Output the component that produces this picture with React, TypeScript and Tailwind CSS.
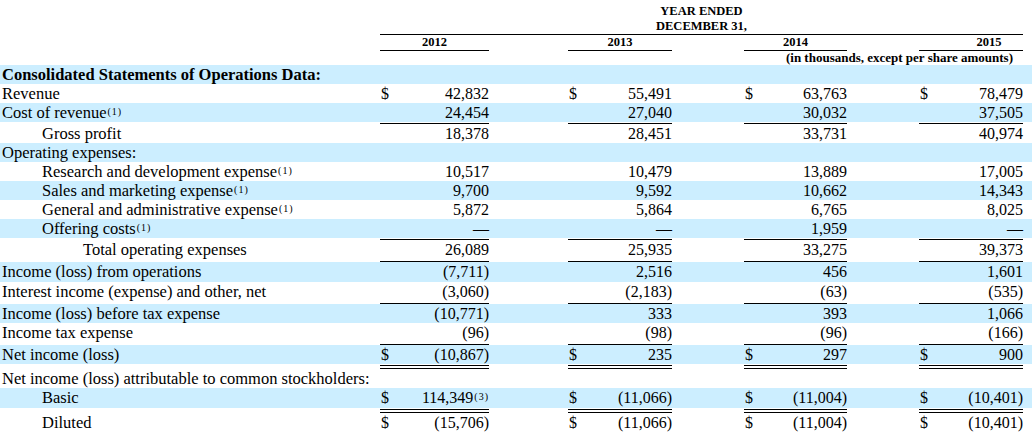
import React, { Fragment, ReactNode } from "react";

const COLS = "grid grid-cols-[380px_109px_79px_104px_72px_103px_72px_104px_9px]";

const Sup = ({ n }: { n: string }) => (
  <span className="relative -top-[3px] ml-[1px] text-[10px] tracking-[1px]">({n})</span>
);

type RowDef = {
  label: ReactNode;
  indent?: 0 | 1 | 2;
  bold?: boolean;
  blue?: boolean;
  vals?: ReactNode[];
  dollar?: boolean;
  h?: 19 | 20;
  rule?: "single" | "double";
};

const HEIGHT: Record<number, string> = {
  19: "h-[19px] leading-[19px]",
  20: "h-[20px] leading-[20px]",
};
const INDENT = ["pl-[2px]", "pl-[42px]", "pl-[83px]"];

const rows: RowDef[] = [
  { label: "Consolidated Statements of Operations Data:", bold: true, blue: true },
  { label: "Revenue", vals: ["42,832", "55,491", "63,763", "78,479"], dollar: true },
  {
    label: <>Cost of revenue<Sup n="1" /></>,
    blue: true,
    vals: ["24,454", "27,040", "30,032", "37,505"],
    rule: "single",
  },
  { label: "Gross profit", indent: 1, vals: ["18,378", "28,451", "33,731", "40,974"] },
  { label: "Operating expenses:", blue: true },
  {
    label: <>Research and development expense<Sup n="1" /></>,
    indent: 1,
    vals: ["10,517", "10,479", "13,889", "17,005"],
  },
  {
    label: <>Sales and marketing expense<Sup n="1" /></>,
    indent: 1,
    blue: true,
    vals: ["9,700", "9,592", "10,662", "14,343"],
  },
  {
    label: <>General and administrative expense<Sup n="1" /></>,
    indent: 1,
    vals: ["5,872", "5,864", "6,765", "8,025"],
  },
  {
    label: <>Offering costs<Sup n="1" /></>,
    indent: 1,
    blue: true,
    vals: ["—", "—", "1,959", "—"],
    rule: "single",
  },
  {
    label: "Total operating expenses",
    indent: 2,
    h: 20,
    vals: ["26,089", "25,935", "33,275", "39,373"],
    rule: "single",
  },
  {
    label: "Income (loss) from operations",
    blue: true,
    h: 20,
    vals: ["(7,711)", "2,516", "456", "1,601"],
  },
  {
    label: "Interest income (expense) and other, net",
    h: 20,
    vals: ["(3,060)", "(2,183)", "(63)", "(535)"],
    rule: "single",
  },
  {
    label: "Income (loss) before tax expense",
    blue: true,
    vals: ["(10,771)", "333", "393", "1,066"],
  },
  {
    label: "Income tax expense",
    h: 20,
    vals: ["(96)", "(98)", "(96)", "(166)"],
    rule: "single",
  },
  {
    label: "Net income (loss)",
    blue: true,
    dollar: true,
    vals: ["(10,867)", "235", "297", "900"],
    rule: "double",
  },
  { label: "Net income (loss) attributable to common stockholders:" },
  {
    label: "Basic",
    indent: 1,
    blue: true,
    h: 20,
    dollar: true,
    vals: [
      <>
        114,349
        <Sup n="3" />
      </>,
      "(11,066)",
      "(11,004)",
      "(10,401)",
    ],
    rule: "double",
  },
  {
    label: "Diluted",
    indent: 1,
    dollar: true,
    vals: ["(15,706)", "(11,066)", "(11,004)", "(10,401)"],
  },
];

function Rule({ kind }: { kind: "single" | "double" }) {
  const line =
    kind === "single" ? (
      <div className="h-[2px] border-b border-black" />
    ) : (
      <div className="mt-[1px] h-[4px] border-y border-black" />
    );
  return (
    <div className={`${COLS} ${kind === "single" ? "h-[2px]" : "h-[5px]"}`}>
      <div />
      {[0, 1, 2, 3].map((i) => (
        <Fragment key={i}>
          {line}
          <div />
        </Fragment>
      ))}
    </div>
  );
}

function Row({ r }: { r: RowDef }) {
  return (
    <div className={`${COLS} ${HEIGHT[r.h ?? 19]} ${r.blue ? "bg-[#cceeff]" : ""}`}>
      <div
        className={`${INDENT[r.indent ?? 0]} whitespace-nowrap ${
          r.bold ? "font-bold text-[16.5px]" : "text-[16.5px]"
        }`}
      >
        {r.label}
      </div>
      {r.vals
        ? r.vals.map((v, i) => (
            <Fragment key={i}>
              <div className="flex justify-between whitespace-nowrap pl-[1px] text-[16px]">
                <span>{r.dollar ? "$" : ""}</span>
                <span>{v}</span>
              </div>
              <div />
            </Fragment>
          ))
        : null}
    </div>
  );
}

export default function App() {
  return (
    <div
      className="h-[432px] w-[1032px] overflow-hidden bg-white text-black"
      style={{ fontFamily: '"Liberation Serif", "Times New Roman", serif' }}
    >
      {/* header */}
      <div className={`${COLS} h-[35px]`}>
        <div />
        <div className="col-start-2 col-end-9 border-b border-black pt-[4px] text-center text-[12.5px] font-bold leading-[15px]">
          <div>YEAR ENDED</div>
          <div>DECEMBER 31,</div>
        </div>
      </div>
      <div className={`${COLS} h-[16px] text-[12.5px] font-bold leading-[15px]`}>
        <div />
        <div className="border-b border-black text-center">2012</div>
        <div />
        <div className="border-b border-black text-center">2013</div>
        <div />
        <div className="border-b border-black text-center">2014</div>
        <div />
        <div className="border-b border-black pl-[36px] text-center">2015</div>
        <div />
      </div>
      <div className={`${COLS} h-[14px] text-[13px] font-bold leading-[14px]`}>
        <div className="col-start-6 col-end-10 whitespace-nowrap pr-[19px] text-right">
          (in thousands, except per share amounts)
        </div>
      </div>
      {rows.map((r, i) => (
        <Fragment key={i}>
          <Row r={r} />
          {r.rule ? <Rule kind={r.rule} /> : null}
        </Fragment>
      ))}
    </div>
  );
}
